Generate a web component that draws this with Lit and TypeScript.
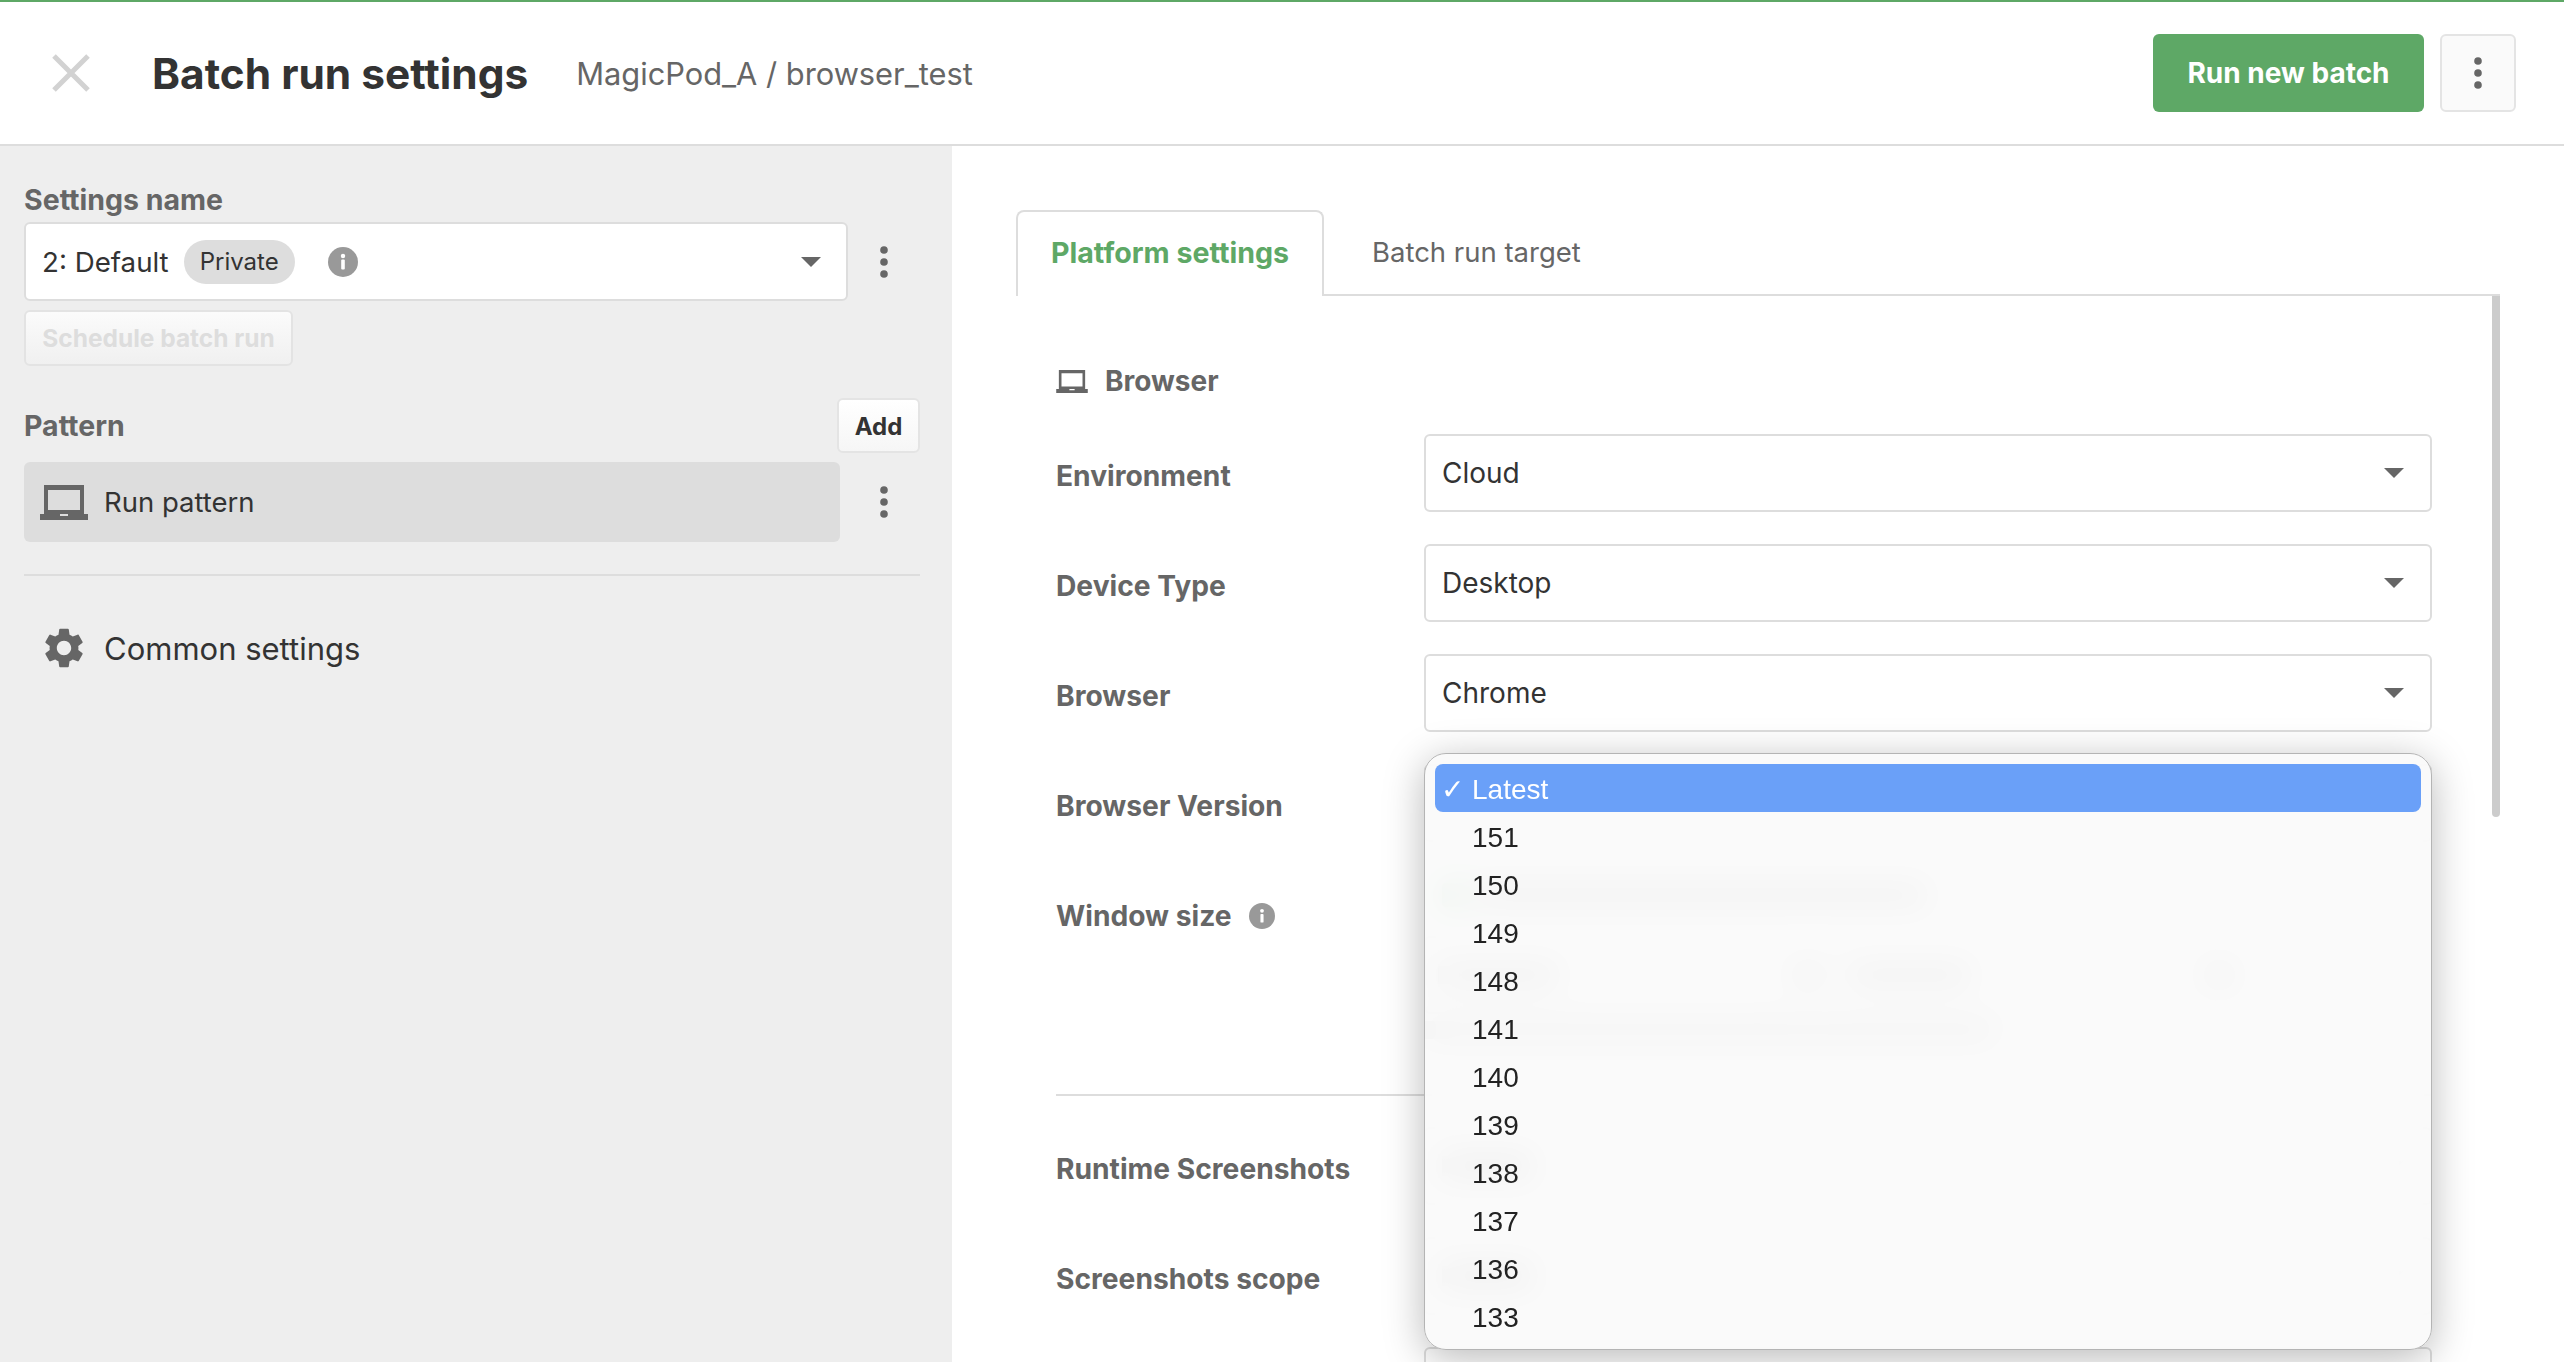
import { LitElement, html, css, svg } from "lit";
import { customElement } from "lit/decorators.js";

const VERSIONS = ["151","150","149","148","141","140","139","138","137","136","133"];

const laptop = (cls: string) => html`<svg class=${cls} viewBox="0 0 48 35"><path fill-rule="evenodd" d="M4 0H44V29H48V35H0V29H4ZM8 5V25H40V5ZM20 29V31H28V29Z"/></svg>`;
const gear = html`<svg class="gear" viewBox="0 0 24 24"><path d="M19.14,12.94c0.04-0.3,0.06-0.61,0.06-0.94c0-0.32-0.02-0.64-0.07-0.94l2.03-1.58c0.18-0.14,0.23-0.41,0.12-0.61l-1.92-3.32c-0.12-0.22-0.37-0.29-0.59-0.22l-2.39,0.96c-0.5-0.38-1.03-0.7-1.62-0.94L14.4,2.81c-0.04-0.24-0.24-0.41-0.48-0.41h-3.84c-0.24,0-0.43,0.17-0.47,0.41L9.25,5.35C8.66,5.59,8.12,5.92,7.63,6.29L5.24,5.33c-0.22-0.08-0.47,0-0.59,0.22L2.74,8.87C2.62,9.08,2.66,9.34,2.86,9.48l2.03,1.58C4.84,11.36,4.8,11.69,4.8,12s0.02,0.64,0.07,0.94l-2.03,1.58c-0.18,0.14-0.23,0.41-0.12,0.61l1.92,3.32c0.12,0.22,0.37,0.29,0.59,0.22l2.39-0.96c0.5,0.38,1.03,0.7,1.62,0.94l0.36,2.54c0.05,0.24,0.24,0.41,0.48,0.41h3.84c0.24,0,0.44-0.17,0.47-0.41l0.36-2.54c0.59-0.24,1.13-0.56,1.62-0.94l2.39,0.96c0.22,0.08,0.47,0,0.59-0.22l1.92-3.32c0.12-0.22,0.07-0.47-0.12-0.61L19.14,12.94z M12,15.6c-1.98,0-3.6-1.62-3.6-3.6s1.62-3.6,3.6-3.6s3.6,1.62,3.6,3.6S13.98,15.6,12,15.6z"/></svg>`;
const kebab = html`<svg class="kebab" viewBox="0 0 8 32">${svg`<circle cx="4" cy="4" r="3.8"/><circle cx="4" cy="16" r="3.8"/><circle cx="4" cy="28" r="3.8"/>`}</svg>`;
const caret = html`<svg class="caret" viewBox="0 0 20 10"><path d="M0 0H20L10 10Z"/></svg>`;
const info = (cls: string) => html`<svg class=${cls} viewBox="0 0 30 30"><circle cx="15" cy="15" r="15" fill="#999"/><circle cx="15" cy="9" r="2.2" fill="#fff"/><rect x="13.2" y="12.6" width="3.6" height="10" rx="1" fill="#fff"/></svg>`;

@customElement("app-root")
export class AppRoot extends LitElement {
  static styles = css`
    :host { display: flex; flex-direction: column; width: 100vw; height: 100vh; overflow: hidden; background: #fff; font-family: Inter, "Liberation Sans", sans-serif; color: #333; }
    * { box-sizing: border-box; }
    header { flex: none; height: 146px; border-top: 2px solid #5ea866; border-bottom: 2px solid #ddd; display: flex; align-items: center; padding: 0 48px 0 52px; }
    .close { width: 38px; height: 38px; flex: none; stroke: #d2d2d2; stroke-width: 5; fill: none; }
    h1 { margin: 0 0 0 62px; font-size: 42.4px; font-weight: 700; color: #333; white-space: nowrap; }
    .crumb { margin-left: 48px; font-size: 30.8px; color: #666; white-space: nowrap; }
    .spacer { flex: 1; }
    .run { width: 271px; height: 78px; background: #5ea866; border-radius: 6px; color: #fff; font-size: 28px; font-weight: 700; display: flex; align-items: center; justify-content: center; }
    .more { margin-left: 16px; width: 76px; height: 78px; background: #fafafa; border: 2px solid #e4e4e4; border-radius: 6px; display: flex; align-items: center; justify-content: center; }
    .kebab { width: 8px; height: 32px; fill: #666; display: block; }
    .main { flex: 1; display: flex; min-height: 0; }
    aside { width: 952px; flex: none; background: #eee; padding: 34px 32px 0 24px; }
    .side-label { font-size: 28.5px; font-weight: 700; color: #666; line-height: 40px; }
    .name-row { display: flex; align-items: center; margin-top: 2px; }
    .kebab-cell { width: 72px; flex: none; display: flex; justify-content: center; }
    .name-select { width: 824px; flex: none; height: 79px; background: #fff; border: 2px solid #ddd; border-radius: 6px; display: flex; align-items: center; padding: 0 25px 0 16px; font-size: 27.7px; color: #333; }
    .pill { margin-left: 15px; width: 111px; height: 44px; border-radius: 22px; background: #ddd; font-size: 24px; display: flex; align-items: center; justify-content: center; }
    .info { width: 30px; height: 30px; margin-left: 33px; }
    .caret { width: 20px; height: 10px; fill: #666; margin-left: auto; }
    .schedule { margin-top: 9px; width: 269px; height: 56px; border: 2px solid #e3e3e3; border-radius: 6px; background: linear-gradient(#fbfbfb, #f0f0f0); color: #ddd; font-size: 24.5px; font-weight: 700; display: flex; align-items: center; justify-content: center; }
    .pattern-head { margin-top: 32px; height: 55px; display: flex; align-items: center; justify-content: space-between; }
    .add { width: 83px; height: 55px; padding-top: 2px; border: 2px solid #e4e4e4; border-radius: 6px; background: linear-gradient(#fff, #f6f6f6); font-size: 24px; font-weight: 700; display: flex; align-items: center; justify-content: center; color: #333; }
    .pattern-row { margin-top: 9px; display: flex; align-items: center; }
    .pattern { width: 816px; flex: none; height: 80px; background: #ddd; border-radius: 6px; display: flex; align-items: center; padding-left: 16px; font-size: 27.5px; color: #333; gap: 16px; }
    .pattern + .kebab-cell { width: 88px; }
    .laptop { width: 48px; height: 35px; fill: #666; flex: none; }
    .side-divider { margin-top: 32px; height: 2px; background: #ddd; }
    .common { margin-top: 48px; height: 48px; display: flex; align-items: center; padding-left: 16px; gap: 16px; font-size: 31px; color: #333; }
    .gear { width: 48px; height: 48px; fill: #666; flex: none; }
    .pane { flex: 1; min-width: 0; padding: 64px 64px 0; }
    .tabs { display: flex; height: 86px; border-bottom: 2px solid #ddd; }
    .tab { display: flex; align-items: center; height: 86px; padding-bottom: 2px; }
    .tab.on { width: 308px; padding-bottom: 4px; border: 2px solid #ddd; border-bottom: none; border-radius: 8px 8px 0 0; background: #fff; color: #5ea866; font-size: 28.6px; font-weight: 700; justify-content: center; }
    .tab.off { padding-left: 48px; color: #666; font-size: 27.5px; }
    .panel { position: relative; padding: 73px 68px 0 40px; }
    .thumb { position: absolute; right: 0; top: 0; width: 8px; height: 521px; background: #ccc; border-radius: 0 0 4px 4px; }
    .section { display: flex; align-items: center; height: 24px; gap: 17px; font-size: 28px; font-weight: 700; color: #666; }
    .section .laptop { width: 32px; height: 23px; }
    .rows { margin-top: 41px; display: flex; flex-direction: column; gap: 32px; }
    .row { display: grid; grid-template-columns: 368px 1fr; }
    .row > label { font-size: 28.2px; font-weight: 700; color: #666; padding-top: 6px; display: flex; align-items: center; height: 78px; gap: 17px; }
    .info.small { width: 26px; height: 26px; margin: 0; }
    .field { position: relative; }
    .select { height: 78px; background: #fff; border: 2px solid #ddd; border-radius: 6px; display: flex; align-items: center; padding: 0 26px 0 16px; font-size: 28px; color: #333; }
    .blank { width: 90px; height: 20px; background: #777; }
    .win { height: 188px; padding-top: 9px; }
    .win-check { display: flex; align-items: center; gap: 10px; height: 24px; padding-left: 18px; }
    .box { width: 24px; height: 24px; background: #4fb35a; border-radius: 4px; }
    .line { width: 450px; height: 18px; background: #888; }
    .win-inputs { margin-top: 29px; display: flex; align-items: center; gap: 16px; }
    .win-input { width: 356px; height: 78px; border: 2px solid #ddd; border-radius: 6px; display: flex; align-items: center; padding-left: 12px; }
    .win-input .line { width: 120px; }
    .times { width: 24px; height: 24px; background: #777; border-radius: 50%; }
    .note { margin-top: 7px; width: 570px; height: 18px; background: #aaa; }
    .divider { height: 2px; background: #ddd; margin-bottom: -1px; }
    .menu { position: absolute; left: 0; top: -11px; width: 1008px; height: 597px; padding: 10px; z-index: 5; background: rgba(250,250,250,0.92); -webkit-backdrop-filter: blur(16px); backdrop-filter: blur(16px); border-radius: 22px; border: 1px solid #b4b4b4; box-shadow: 0 8px 40px rgba(0,0,0,0.28); font-family: "Liberation Sans", Arial, sans-serif; font-size: 28px; color: #222; }
    .opt { height: 48px; display: flex; align-items: center; padding: 3px 0 0 37px; position: relative; }
    .opt.sel { background: #6aa0f8; color: #fff; border-radius: 8px; }
    .tick { position: absolute; left: 6px; font-family: "DejaVu Sans", sans-serif; font-size: 28px; }
  `;

  private select(value: unknown) {
    return html`<div class="select">${value}${caret}</div>`;
  }

  render() {
    return html`
      <header>
        <svg class="close" viewBox="0 0 38 38"><path d="M2 2L36 36M36 2L2 36"/></svg>
        <h1>Batch run settings</h1>
        <span class="crumb">MagicPod_A / browser_test</span>
        <span class="spacer"></span>
        <div class="run">Run new batch</div>
        <div class="more">${kebab}</div>
      </header>
      <div class="main">
        <aside>
          <div class="side-label">Settings name</div>
          <div class="name-row">
            <div class="name-select">2: Default<span class="pill">Private</span>${info("info")}${caret}</div>
            <div class="kebab-cell">${kebab}</div>
          </div>
          <div class="schedule">Schedule batch run</div>
          <div class="pattern-head"><span class="side-label">Pattern</span><div class="add">Add</div></div>
          <div class="pattern-row">
            <div class="pattern">${laptop("laptop")}Run pattern</div>
            <div class="kebab-cell">${kebab}</div>
          </div>
          <div class="side-divider"></div>
          <div class="common">${gear}Common settings</div>
        </aside>
        <section class="pane">
          <div class="tabs">
            <div class="tab on">Platform settings</div>
            <div class="tab off">Batch run target</div>
          </div>
          <div class="panel">
            <div class="thumb"></div>
            <div class="section">${laptop("laptop")}Browser</div>
            <div class="rows">
              <div class="row"><label>Environment</label><div class="field">${this.select("Cloud")}</div></div>
              <div class="row"><label>Device Type</label><div class="field">${this.select("Desktop")}</div></div>
              <div class="row"><label>Browser</label><div class="field">${this.select("Chrome")}</div></div>
              <div class="row"><label>Browser Version</label>
                <div class="field">
                  ${this.select("")}
                  <div class="menu">
                    <div class="opt sel"><span class="tick">✓</span>Latest</div>
                    ${VERSIONS.map((v) => html`<div class="opt">${v}</div>`)}
                  </div>
                </div>
              </div>
              <div class="row"><label>Window size ${info("info small")}</label>
                <div class="field win">
                  <div class="win-check"><span class="box"></span><span class="line"></span></div>
                  <div class="win-inputs">
                    <div class="win-input"><span class="line"></span></div>
                    <span class="times"></span>
                    <div class="win-input"><span class="line"></span></div>
                    <span class="times"></span>
                  </div>
                  <div class="note"></div>
                </div>
              </div>
              <div class="divider"></div>
              <div class="row"><label>Runtime Screenshots</label><div class="field">${this.select(html`<span class="blank"></span>`)}</div></div>
              <div class="row"><label>Screenshots scope</label><div class="field">${this.select(html`<span class="blank"></span>`)}</div></div>
              <div class="row"><label></label><div class="field">${this.select("")}</div></div>
            </div>
          </div>
        </section>
      </div>
    `;
  }
}
